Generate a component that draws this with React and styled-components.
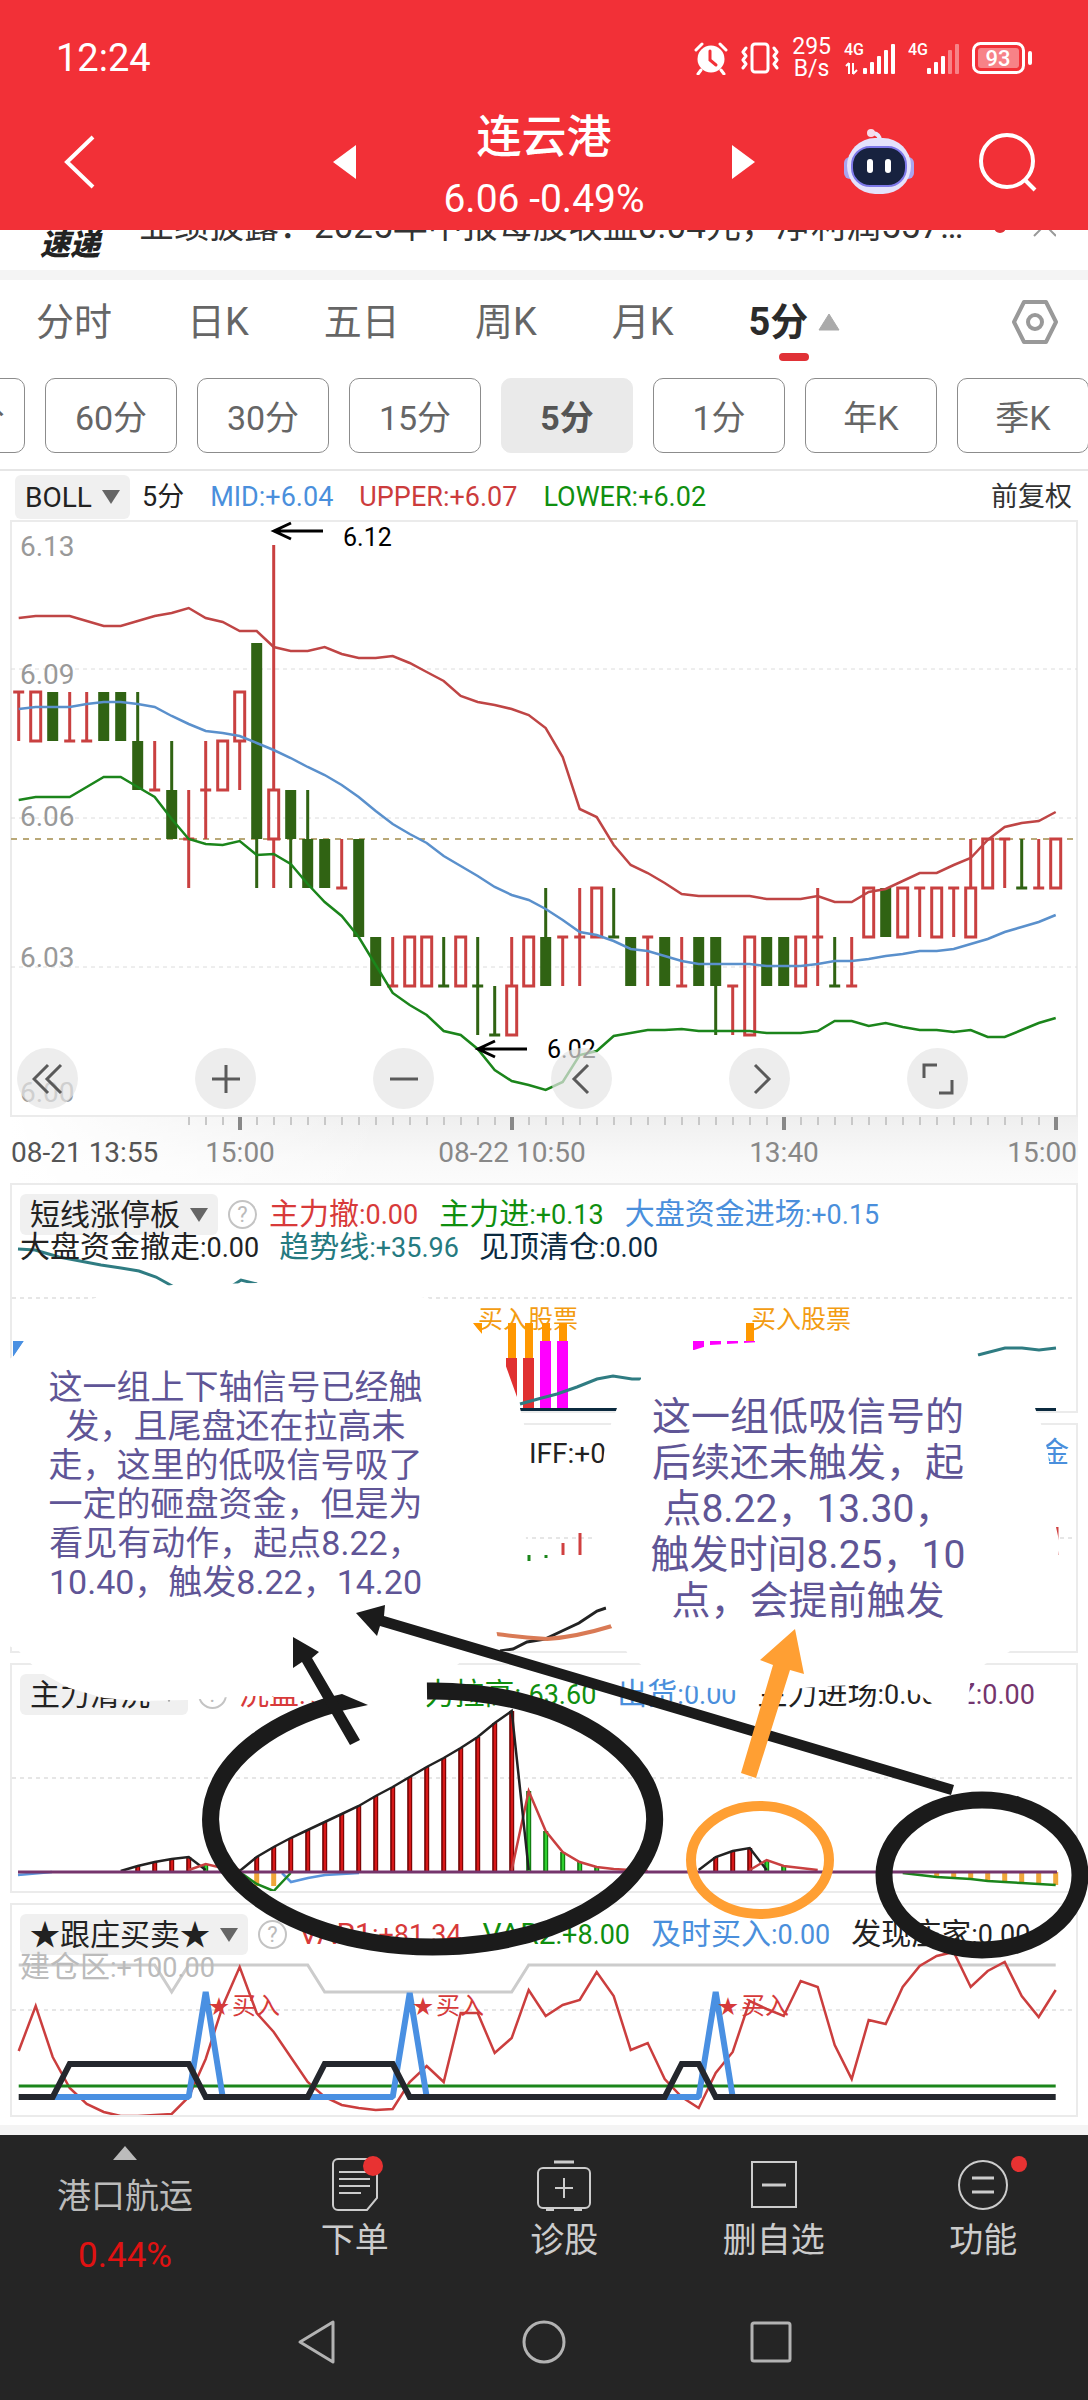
import React from 'react';
import styled, { createGlobalStyle } from 'styled-components';

const Global = createGlobalStyle`
  * { box-sizing: border-box; }
  body { margin: 0; background: #fff; color: #222; font-family: Roboto, "Noto Sans CJK SC", sans-serif; }
  button, select { font: inherit; color: inherit; border: 0; background: none; padding: 0; margin: 0; cursor: pointer; }
  svg { display: block; }
  svg text { font-family: Roboto, "Noto Sans CJK SC", sans-serif; }
  p { margin: 0; }
`;

const RED = '#c94040';
const GREEN = '#306313';
const BLUE = '#4a8fdc';

/* ---------- header ---------- */

const Header = styled.header`
  background: #f23037;
  color: #fff;
`;
const StatusBar = styled.div`
  display: flex;
  align-items: center;
  justify-content: space-between;
  height: 94px;
  padding: 22px 55px 0 56px;
`;
const Clock = styled.span`
  font-size: 38px;
  font-weight: 400;
  line-height: 40px;
`;
const StatusIcons = styled.div`
  display: flex;
  align-items: center;
  gap: 13px;
`;
const NetSpeed = styled.span`
  font-size: 23px;
  line-height: 22px;
  text-align: center;
`;
const TitleBar = styled.div`
  display: grid;
  grid-template-columns: 1fr auto 1fr;
  align-items: center;
  height: 136px;
`;
const BackButton = styled.button`
  justify-self: start;
  padding-left: 64px;
`;
const TitleGroup = styled.div`
  display: flex;
  align-items: center;
  justify-content: space-between;
  width: 422px;
`;
const TitleText = styled.div`
  padding-top: 8px;
  text-align: center;
`;
const StockName = styled.h1`
  margin: 0;
  font-size: 45px;
  font-weight: 500;
  line-height: 66px;
`;
const StockPrice = styled.p`
  font-size: 39px;
  line-height: 56px;
`;
const TitleActions = styled.div`
  display: flex;
  align-items: center;
  justify-content: flex-end;
  gap: 64px;
  padding-right: 50px;
`;

/* ---------- news strip ---------- */

const Ticker = styled.section`
  display: flex;
  align-items: flex-start;
  height: 40px;
  padding: 0 32px 0 40px;
  overflow: hidden;
`;
const TickerLogo = styled.span`
  flex: 0 0 99px;
  font-size: 30px;
  font-weight: 900;
  font-style: italic;
  line-height: 30px;
  white-space: nowrap;
`;
const Headline = styled.a`
  flex: 1;
  margin-top: -28px;
  font-size: 35px;
  line-height: 50px;
  color: #333;
  text-decoration: none;
  white-space: nowrap;
`;
const Band = styled.div`
  height: 10px;
  background: #f4f4f4;
`;

/* ---------- period tabs ---------- */

const Tabs = styled.nav`
  display: flex;
  align-items: center;
  gap: 75px;
  height: 86px;
  padding: 0 30px 2px 36px;
`;
const Tab = styled.button`
  display: flex;
  flex-direction: column;
  align-items: center;
  font-size: 38px;
  line-height: 78px;
  font-weight: ${(p) => (p.$active ? 700 : 400)};
  color: ${(p) => (p.$active ? '#2b2b2b' : '#666')};
`;
const TabLabel = styled.span`
  display: flex;
  align-items: center;
  gap: 10px;
`;
const Underline = styled.span`
  width: 30px;
  height: 8px;
  margin-top: -8px;
  border-radius: 4px;
  background: #e03136;
`;
const SettingsButton = styled.button`
  margin-left: auto;
`;
const ChipRow = styled.div`
  overflow: hidden;
  height: 105px;
  padding-top: 12px;
  border-bottom: 2px solid #e6e6e6;
`;
const ChipTrack = styled.div`
  display: flex;
  gap: 20px;
  margin-left: -107px;
`;
const Chip = styled.button`
  flex: 0 0 132px;
  height: 75px;
  border: 1px solid ${(p) => (p.$active ? '#eaeaea' : '#8c8c8c')};
  border-radius: 10px;
  background: ${(p) => (p.$active ? '#eaeaea' : '#fff')};
  color: ${(p) => (p.$active ? '#555' : '#666')};
  font-size: 34px;
  font-weight: ${(p) => (p.$active ? 700 : 400)};
`;

/* ---------- legends ---------- */

const Picker = styled.label`
  display: flex;
  align-items: center;
  height: ${(p) => (p.$tall ? 44 : 41)}px;
  border-radius: 6px;
  background: #f0f0f0;
  select {
    appearance: none;
    height: 100%;
    padding: 0 38px 0 10px;
    font-size: ${(p) => (p.$tall ? 28 : 30)}px;
    color: #222;
    outline: none;
  }
  svg {
    margin-left: -28px;
    margin-right: 10px;
    pointer-events: none;
  }
`;
const MainLegend = styled.div`
  display: flex;
  align-items: center;
  gap: 26px;
  height: 49px;
  padding: 2px 16px 0 15px;
  font-size: 27px;
  line-height: 46px;
  white-space: nowrap;
`;
const PeriodGroup = styled.span`
  display: flex;
  align-items: center;
  gap: 12px;
`;
const Adjust = styled.button`
  margin-left: auto;
  color: #333;
`;
const Legend = styled.div`
  grid-area: 1 / 1;
  position: relative;
  padding: 8px 8px 0;
`;
const LegendRow = styled.div`
  display: flex;
  align-items: center;
  gap: ${(p) => (p.$second ? 20 : 21)}px;
  margin-top: ${(p) => (p.$second ? -4 : 0)}px;
  line-height: ${(p) => (p.$second ? 30 : 41)}px;
  font-size: 30px;
  white-space: nowrap;
`;
const PickerGroup = styled.span`
  display: flex;
  align-items: center;
  gap: 10px;
  margin-right: -9px;
`;
const HelpButton = styled.button`
  width: 29px;
  height: 29px;
  border: 2px solid #c4c4c4;
  border-radius: 50%;
  color: #bbb;
  font-size: 22px;
  line-height: 25px;
`;
const Item = styled.span`
  color: ${(p) => p.$color};
`;
const Num = styled.span`
  font-size: 27px;
`;

/* ---------- charts ---------- */

const ChartArea = styled.section`
  position: relative;
`;
const Drawing = styled.svg`
  width: 100%;
  height: auto;
`;
const Tools = styled.div`
  position: absolute;
  left: 17px;
  top: 528px;
  display: flex;
  gap: 117px;
`;
const ToolButton = styled.button`
  display: grid;
  place-items: center;
  width: 61px;
  height: 61px;
  border-radius: 50%;
  background: rgba(229, 229, 229, 0.7);
`;
const Stage = styled.section`
  position: relative;
  display: flex;
  flex-direction: column;
  gap: 10px;
  padding: 0 10px 8px;
`;
const Panel = styled.article`
  display: grid;
  border: 2px solid #ebebeb;
`;
const PanelDrawing = styled(Drawing)`
  grid-area: 1 / 1;
`;
const Marks = styled(Drawing)`
  position: absolute;
  left: 0;
  top: 0;
  pointer-events: none;
`;
const Note = styled.p`
  position: absolute;
  left: ${(p) => p.$left}%;
  top: ${(p) => p.$top}px;
  width: ${(p) => p.$width}px;
  font-size: ${(p) => p.$size}px;
  line-height: ${(p) => p.$line}px;
  color: #5f5596;
  text-align: center;
  white-space: nowrap;
  span { display: block; }
`;

/* ---------- footer ---------- */

const Footer = styled.footer`
  background: #252525;
  color: #ccc;
`;
const ActionBar = styled.nav`
  display: flex;
  height: 158px;
`;
const Sector = styled.button`
  display: flex;
  flex-direction: column;
  align-items: center;
  width: 250px;
  padding-top: 11px;
  font-size: 34px;
  line-height: 60px;
  color: #bbb;
  white-space: nowrap;
`;
const SectorName = styled.span`
  margin-top: 6px;
`;
const Change = styled.span`
  font-size: 35px;
  color: #e01212;
`;
const Action = styled.button`
  flex: 1;
  display: flex;
  flex-direction: column;
  align-items: center;
  padding-top: 20px;
  font-size: 34px;
  line-height: 54px;
  color: #ccc;
`;
const SystemBar = styled.nav`
  display: flex;
  justify-content: center;
  align-items: center;
  gap: 183px;
  height: 107px;
  padding-bottom: 10px;
`;

/* ---------- data ---------- */

const px = (i) => 18.7 + 17 * i;
const level = (l) => 692 + 49 * l;
const line = (ys, from = 0) => ys.map((y, k) => `${px(from + k)},${y}`).join(' ');

// kind, high, body top, body bottom, low (in price steps of 0.01 below 6.09)
const candles = [
  'r 0 0 0 1', 'r 0 0 1 1', 'g 0 0 1 1', 'r 0 1 1 1', 'r 0 1 1 1', 'g 0 0 1 1', 'g 0 0 1 1', 'g 0 1 2 2',
  'r 1 2 2 2', 'g 1 2 3 3', 'r 2 3 3 4', 'r 1 2 2 3', 'r 1 1 2 2', 'r 0 0 1 2', 'g -1 -1 3 4', 'r -3 2 3 4',
  'g 2 2 3 4', 'g 2 3 4 4', 'g 3 3 4 4', 'r 3 4 4 4', 'g 3 3 5 5', 'g 5 5 6 6', 'r 5 6 6 6', 'r 5 5 6 6',
  'r 5 5 6 6', 'g 5 6 6 6', 'r 5 5 6 6', 'g 5 6 6 7', 'g 6 7 7 7', 'r 5 6 7 7', 'r 5 5 6 6', 'g 4 5 6 6',
  'r 5 5 5 6', 'r 4 5 5 6', 'r 4 4 5 5', 'g 4 5 5 5', 'g 5 5 6 6', 'r 5 5 5 6', 'g 5 5 6 6', 'r 5 6 6 6',
  'g 5 5 6 6', 'g 5 5 6 7', 'r 6 6 6 7', 'r 5 5 7 7', 'g 5 5 6 6', 'g 5 5 6 6', 'r 5 5 6 6', 'r 4 5 5 6',
  'g 5 6 6 6', 'r 5 6 6 6', 'r 4 4 5 5', 'g 4 4 5 5', 'r 4 4 5 5', 'r 4 4 4 5', 'r 4 4 5 5', 'r 4 4 4 5',
  'r 3 4 5 5', 'r 3 3 4 4', 'r 3 3 3 4', 'g 3 4 4 4', 'r 3 4 4 4', 'r 3 3 4 4',
].map((s) => s.split(' '));

const upper = [618, 616, 616, 616, 621, 626, 626, 621, 616, 613, 608, 618, 622, 631, 631, 647, 651, 651, 647, 654, 658, 658, 656, 663, 672, 681, 696, 702, 705, 709, 715, 728, 757, 809, 817, 845, 865, 873, 883, 894, 896, 896, 896, 896, 899, 899, 899, 896, 902, 902, 892, 889, 881, 873, 873, 865, 858, 840, 827, 823, 821, 812];
const mid = [709, 707, 707, 707, 704, 702, 702, 704, 707, 716, 724, 731, 733, 736, 743, 750, 758, 767, 775, 785, 797, 811, 824, 834, 843, 856, 866, 876, 887, 895, 900, 909, 920, 932, 935, 941, 949, 951, 956, 961, 964, 964, 964, 964, 966, 966, 966, 964, 961, 961, 959, 956, 954, 951, 951, 949, 944, 939, 932, 927, 922, 915];
const lower = [800, 797, 797, 797, 787, 777, 777, 787, 797, 819, 839, 844, 845, 841, 855, 854, 864, 884, 902, 916, 937, 965, 993, 1005, 1015, 1031, 1035, 1049, 1070, 1081, 1085, 1090, 1082, 1055, 1051, 1036, 1033, 1030, 1030, 1029, 1031, 1031, 1031, 1031, 1033, 1033, 1033, 1031, 1021, 1021, 1026, 1023, 1027, 1030, 1030, 1032, 1030, 1037, 1037, 1030, 1023, 1018];

const rise = [1871, 1857, 1847, 1838, 1830, 1822, 1814, 1806, 1796, 1787, 1777, 1767, 1758, 1748, 1737, 1723, 1711, 1870];
const fall = [1870, 1791, 1831, 1852, 1862, 1867, 1869, 1870, 1871];
const varLine = [2051, 2006, 2057, 2088, 2104, 2112, 2116, 2116, 2115, 2114, 2097, 2059, 2006, 1967, 2013, 2032, 2057, 2082, 2097, 2105, 2108, 2110, 2109, 2082, 2066, 2082, 2013, 2013, 2053, 2038, 1990, 2016, 2005, 2000, 1972, 1996, 2050, 2043, 2079, 2097, 2108, 2073, 2052, 2001, 2009, 2016, 1981, 1987, 2045, 2079, 2020, 2024, 1987, 1966, 1956, 1952, 1987, 1971, 1962, 1996, 2017, 1990];

function Candle({ i, c }) {
  const [kind, ...v] = c;
  const [h, t, b, l] = v.map((n) => level(Number(n)));
  const x = px(i);
  if (kind === 'g') {
    return (
      <g fill={GREEN}>
        <rect x={x - 1.5} y={h} width="3" height={l - h} />
        {b > t ? <rect x={x - 5.5} y={t} width="11" height={b - t} /> : <rect x={x - 5.5} y={t - 1.5} width="11" height="3" />}
      </g>
    );
  }
  return (
    <g fill={RED}>
      {t > h && <rect x={x - 1.5} y={h} width="3" height={t - h} />}
      {l > b && <rect x={x - 1.5} y={b} width="3" height={l - b} />}
      {b > t ? (
        <rect x={x - 5} y={t} width="10" height={b - t} fill="none" stroke={RED} strokeWidth="3" />
      ) : (
        <rect x={x - 5.5} y={t - 1.5} width="11" height="3" />
      )}
    </g>
  );
}

const Arrow = ({ x, y }) => (
  <path d={`M${x + 17} ${y - 8} L${x} ${y} L${x + 17} ${y + 8} M${x} ${y} H${x + 49}`} fill="none" stroke="#000" strokeWidth="3" />
);

function PriceChart() {
  const ticks = Array.from({ length: 52 }, (_, k) => k + 10);
  return (
    <Drawing viewBox="0 520 1088 663" role="img" aria-label="连云港 5分 K线">
      <defs>
        <linearGradient id="axisFade" x1="0" x2="1">
          <stop offset="0" stopColor="#fff" />
          <stop offset="0.35" stopColor="#fff" stopOpacity="0" />
        </linearGradient>
        <linearGradient id="axisShade" x1="0" x2="0" y1="0" y2="1">
          <stop offset="0" stopColor="#efefef" />
          <stop offset="0.7" stopColor="#f9f9f9" />
          <stop offset="1" stopColor="#fbfbfb" />
        </linearGradient>
      </defs>
      <rect x="10" y="1116" width="1068" height="67" fill="url(#axisShade)" />
      <rect x="10" y="1116" width="1068" height="67" fill="url(#axisFade)" />
      <rect x="11" y="521" width="1066" height="595" fill="#fff" stroke="#ebebeb" strokeWidth="2" />
      <path d="M11 669 H1077 M11 818 H1077 M11 967 H1077" stroke="#dcdcdc" strokeWidth="1" strokeDasharray="4 4" />
      <path d="M11 839 H1077" stroke="#b9a878" strokeWidth="2" strokeDasharray="6 6" />
      {candles.map((c, i) => <Candle key={i} i={i} c={c} />)}
      <g fill="none" strokeWidth="2.5">
        <polyline points={line(upper)} stroke="#bf4545" />
        <polyline points={line(mid)} stroke="#5a90cc" />
        <polyline points={line(lower)} stroke="#1b851b" />
      </g>
      <g fontSize="28" fill="#999">
        <text x="20" y="556">6.13</text>
        <text x="20" y="684">6.09</text>
        <text x="20" y="826">6.06</text>
        <text x="20" y="967">6.03</text>
        <text x="20" y="1102">6.00</text>
      </g>
      <Arrow x={274} y={531} />
      <Arrow x={478} y={1049} />
      <g fontSize="25" fill="#000">
        <text x="343" y="546">6.12</text>
        <text x="547" y="1058">6.02</text>
      </g>
      {ticks.map((i) => {
        const major = (i - 13) % 16 === 0;
        return <rect key={i} x={i * 17 + (major ? 17 : 18)} y="1117" width={major ? 4 : 2} height={major ? 13 : 8} fill={major ? '#888' : '#c8c8c8'} />;
      })}
      <g fontSize="28" fill="#888" textAnchor="middle">
        <text x="11" y="1162" textAnchor="start" fill="#555">08-21 13:55</text>
        <text x="240" y="1162">15:00</text>
        <text x="512" y="1162">08-22 10:50</text>
        <text x="784" y="1162">13:40</text>
        <text x="1077" y="1162" textAnchor="end">15:00</text>
      </g>
    </Drawing>
  );
}

const ToolIcon = ({ d }) => (
  <svg width="32" height="32" viewBox="0 0 32 32" fill="none" stroke="#5a5a5a" strokeWidth="3">
    <path d={d} />
  </svg>
);

const tools = [
  ['快退', 'M16 2 L2 16 L16 30 M29 2 L15 16 L29 30'],
  ['放大', 'M16 2 V30 M2 16 H30'],
  ['缩小', 'M2 16 H30'],
  ['左移', 'M22 2 L8 16 L22 30'],
  ['右移', 'M11 2 L25 16 L11 30'],
  ['全屏', 'M2 15 V2 H15 M30 17 V30 H17'],
];

const Caret = () => (
  <svg width="18" height="14" viewBox="0 0 18 14"><path d="M0 0 H18 L9 14 Z" fill="#666" /></svg>
);

const IndicatorPicker = ({ name, tall }) => (
  <Picker $tall={tall}>
    <select aria-label="指标" defaultValue={name}><option>{name}</option></select>
    <Caret />
  </Picker>
);

function IndicatorLegend({ name, items, more }) {
  const draw = ([label, num, color]) => (
    <Item key={label} $color={color}>{label}<Num>:{num}</Num></Item>
  );
  return (
    <Legend>
      <LegendRow>
        <PickerGroup>
          <IndicatorPicker name={name} />
          <HelpButton aria-label="指标说明">?</HelpButton>
        </PickerGroup>
        {items.map(draw)}
      </LegendRow>
      {more && <LegendRow $second>{more.map(draw)}</LegendRow>}
    </Legend>
  );
}

const grid = (y) => <path d={`M12 ${y} H1076`} stroke="#e6e6e6" strokeWidth="2" strokeDasharray="4 4" />;

const Bars = ({ from, tops, dark, light, base = 1871 }) =>
  tops.map((y, k) => (
    <g key={k}>
      <rect x={px(from + k) - 2.5} y={y} width="5" height={base - y} fill={dark} />
      <rect x={px(from + k) - 1} y={y} width="2.5" height={base - y} fill={light} />
    </g>
  ));

function FundsPanel() {
  return (
    <Panel>
      <PanelDrawing viewBox="12 1185 1064 226">
        {grid(1298)}
        <g fill="none" stroke="#2f7c82" strokeWidth="3">
          <path d="M18 1249 L35 1250 L59 1257 L101 1265 L121 1268 L139 1271 L156 1277 L174 1287 M232 1286 L241 1280 L257 1284" />
          <path d="M978 1355 L1005 1348 L1022 1348 L1039 1350 L1056 1348" />
        </g>
        <g fill="#f39c12" fontSize="25">
          <text x="478" y="1328">买入股票</text>
          <text x="751" y="1328">买入股票</text>
        </g>
        <path d="M13 1341 H24 L13 1357 Z" fill="#4a90e2" />
        <path d="M473 1323 h9 v12 Z M508 1323 h8 v36 h-8 Z M525 1323 h8 v36 h-8 Z M542 1323 h8 v20 h-8 Z M559 1323 h8 v20 h-8 Z M746 1323 h8 v18 h-8 Z" fill="#ff9800" />
        <path d="M506 1358 h11 v52 h-11 Z M523 1358 h11 v52 h-11 Z" fill="#e03131" />
        <path d="M540 1341 h11 v70 h-11 Z M557 1341 h11 v70 h-11 Z M693 1341 h11 v9 h-11 Z M710 1341 h11 v4 h-11 Z M727 1341 h11 v3 h-11 Z M744 1341 h11 v2 h-11 Z" fill="#f0f" />
        <path d="M520 1404 L538 1399 L557 1394 L577 1387 L597 1379 L613 1376 L632 1379 L641 1379" fill="none" stroke="#2f7c82" strokeWidth="3" />
        <path d="M520 1410 H1056" stroke="#0b2a3f" strokeWidth="4" />
      </PanelDrawing>
      <IndicatorLegend
        name="短线涨停板"
        items={[['主力撤', '0.00', '#d83a3a'], ['主力进', '+0.13', '#0f8f0f'], ['大盘资金进场', '+0.15', BLUE]]}
        more={[['大盘资金撤走', '0.00', '#222'], ['趋势线', '+35.96', '#257a80'], ['见顶清仓', '0.00', '#0b2a3f']]}
      />
    </Panel>
  );
}

function DiffPanel() {
  return (
    <Panel>
      <PanelDrawing viewBox="12 1425 1064 226">
        {grid(1538)}
        <text x="529" y="1463" fontSize="28" fill="#222">IFF:+0</text>
        <text x="1040" y="1463" fontSize="29" fill={BLUE}>金</text>
        <path d="M529 1555 v6 M546 1555 v3" stroke="#1b851b" strokeWidth="3" />
        <path d="M563 1543 v12 M580 1533 v22 M1057 1527 v28" stroke="#d04040" strokeWidth="3" />
        <path d="M500 1651 L513 1649 L527 1642 L545 1639 L562 1631 L579 1623 L597 1611 L606 1608" fill="none" stroke="#222" strokeWidth="3" />
        <path d="M496 1634 Q520 1637 547 1639 Q576 1637 612 1626" fill="none" stroke="#d97a55" strokeWidth="4" />
      </PanelDrawing>
    </Panel>
  );
}

function WashPanel() {
  return (
    <Panel>
      <PanelDrawing viewBox="12 1665 1064 226">
        {grid(1778)}
        <Bars from={7} tops={[1866, 1862, 1859, 1857]} dark="#6b0000" light="#d81818" />
        <Bars from={14} tops={rise.slice(1, 17)} dark="#6b0000" light="#d81818" />
        <Bars from={41} tops={[1857, 1851, 1848]} dark="#6b0000" light="#d81818" />
        <Bars from={11} tops={[1865]} dark="#0a6b0a" light="#2fd02f" />
        <Bars from={30} tops={fall.slice(1, 6)} dark="#0a6b0a" light="#2fd02f" />
        <Bars from={44} tops={[1860, 1866]} dark="#0a6b0a" light="#2fd02f" />
        <Bars from={14} tops={[1873, 1873]} dark="#efa63a" light="#efa63a" base={1886} />
        {[54, 55, 56, 57, 58, 59, 60, 61].map((i) => (
          <rect key={i} x={px(i) - 2.5} y="1872" width="5" height={5 + (i - 53)} fill="#efa63a" />
        ))}
        <path d="M18 1875 L52 1872 M282 1873 L291 1882 L308 1878 L325 1875 L359 1873" fill="none" stroke="#5a95dd" strokeWidth="2.5" />
        <g fill="none" strokeWidth="2.5">
          <polyline points={line([1871, 1866, 1862, 1859, 1857, 1870], 6)} stroke="#222" />
          <polyline points={line([1870, 1864, 1868, 1870], 10)} stroke={RED} />
          <polyline points={line(fall, 29)} stroke={RED} />
          <polyline points={line(rise, 13)} stroke="#222" />
          <polyline points={line([1870, 1857, 1851, 1848, 1870], 40)} stroke="#222" />
          <polyline points={line([1870, 1860, 1866, 1868, 1870], 43)} stroke={RED} />
          <polyline points={line([1872, 1884, 1891, 1873], 13)} stroke="#1b851b" />
          <polyline points={line([1873, 1875, 1877, 1878, 1879, 1881, 1882, 1883, 1884, 1885], 52)} stroke="#1b851b" />
        </g>
        <path d="M18 1872 H1057" stroke="#75356d" strokeWidth="3" />
      </PanelDrawing>
      <IndicatorLegend
        name="主力清洗"
        items={[['洗盘', '+0.00', '#d83a3a'], ['主力拉高', '-63.60', '#0f8f0f'], ['出货', '0.00', BLUE], ['主力进场', '0.00', '#222'], ['Z', '0.00', '#75356d']]}
      />
    </Panel>
  );
}

function DealerPanel() {
  return (
    <Panel>
      <PanelDrawing viewBox="12 1905 1064 210">
        {grid(2010)}
        <path d={`M18.7 1965 H${px(8)} L${px(9)} 1992 L${px(10)} 1965 H${px(17)} L${px(18)} 1992 H${px(29)} L${px(30)} 1965 H${px(61)}`} fill="none" stroke="#ccc" strokeWidth="3" />
        <polyline points={line(varLine)} fill="none" stroke="#cb3e3e" strokeWidth="2.5" />
        <path d={`M18.7 2086 H${px(61)}`} stroke="#1b851b" strokeWidth="3" />
        <g fill="none" stroke="#4a90e2" strokeWidth="6" strokeLinejoin="bevel">
          <path d={`M${px(2)} 2097 H${px(10)} L${px(11)} 1992 L${px(12)} 2097`} />
          <path d={`M${px(17)} 2097 H${px(22)} L${px(23)} 1993 L${px(24)} 2097`} />
          <path d={`M${px(38)} 2097 H${px(40)} L${px(41)} 1992 L${px(42)} 2097`} />
        </g>
        <path
          d={`M18.7 2097 H${px(2)} L${px(3)} 2064 H${px(10)} L${px(11)} 2097 H${px(17)} L${px(18)} 2064 H${px(22)} L${px(23)} 2097 H${px(38)} L${px(39)} 2064 H${px(40)} L${px(41)} 2097 H${px(61)}`}
          fill="none" stroke="#24272d" strokeWidth="6"
        />
        {[209, 413, 718].map((x) => (
          <text key={x} x={x} y="2014" fontSize="24" fill="#d63a3a"><tspan fontSize="20">★</tspan><tspan dx="3">买入</tspan></text>
        ))}
      </PanelDrawing>
      <IndicatorLegend
        name="★跟庄买卖★"
        items={[['VAR1', '+81.34', '#d83a3a'], ['VAR2', '+8.00', '#0f8f0f'], ['及时买入', '0.00', BLUE], ['发现庄家', '0.00', '#222']]}
        more={[['建仓区', '+100.00', '#bbb']]}
      />
    </Panel>
  );
}

function Annotations() {
  return (
    <>
      <Marks viewBox="0 1183 1088 942" aria-hidden="true">
        <g fill="#fff">
          <path d="M0 1365 L14 1356 L24 1341 L50 1320 L87 1300 L120 1292 L172 1285 L257 1283 L340 1285 L428 1298 L473 1324 L483 1335 L503 1358 L517 1397 L521 1412 L524 1424 L528 1453 L520 1500 L526 1538 L520 1600 L496 1630 L500 1648 L470 1654 L457 1665 L428 1684 L426 1712 L340 1710 L298 1696 L243 1696 L187 1700 L139 1701 L104 1698 L69 1688 L42 1673 L29 1662 L18 1650 L0 1642 Z" />
          <path d="M694 1350 L710 1345 L760 1342 L900 1335 L978 1356 L1035 1408 L1041 1424 L1048 1453 L1056 1527 L1060 1545 L1050 1600 L1009 1652 L985 1664 L970 1684 L968 1712 L936 1706 L915 1692 L890 1684 L830 1686 L779 1690 L743 1691 L690 1686 L650 1672 L628 1654 L611 1626 L604 1600 L594 1538 L604 1453 L611 1424 L617 1408 L641 1379 Z" />
        </g>
        <g fill="#1b1b1b">
          <path d="M427 1691 A222 128 0 1 1 335 1704" fill="none" stroke="#1b1b1b" strokeWidth="17" />
          <path d="M325 1698 L342 1694 L368 1705 L332 1713 Z" />
          <path d="M293 1637 L319 1652 L312 1658 L360 1740 L350 1745 L302 1662 L293 1668 Z" />
          <path d="M356 1613 L385 1605 L384 1616 L954 1785 L951 1795 L380 1626 L377 1636 Z" />
          <ellipse cx="982" cy="1875" rx="98" ry="75" fill="none" stroke="#1b1b1b" strokeWidth="17" />
        </g>
        <path d="M795 1629 L804 1674 L790 1670 L756 1778 L741 1773 L773 1665 L760 1660 Z" fill="#ff9f33" />
        <ellipse cx="760" cy="1860" rx="69" ry="54" fill="none" stroke="#ff9f33" strokeWidth="10" />
      </Marks>
      <Note $left={4} $top={185} $width={384} $size={34} $line={39}>
        <span>这一组上下轴信号已经触</span>
        <span>发，且尾盘还在拉高未</span>
        <span>走，这里的低吸信号吸了</span>
        <span>一定的砸盘资金，但是为</span>
        <span>看见有动作，起点8.22，</span>
        <span>10.40，触发8.22，14.20</span>
      </Note>
      <Note $left={59} $top={211} $width={332} $size={39} $line={46}>
        <span>这一组低吸信号的</span>
        <span>后续还未触发，起</span>
        <span>点8.22，13.30，</span>
        <span>触发时间8.25，10</span>
        <span>点，会提前触发</span>
      </Note>
    </>
  );
}

/* ---------- icons ---------- */

const AlarmIcon = () => (
  <svg width="34" height="34" viewBox="0 0 34 34">
    <circle cx="17" cy="18" r="13.5" fill="#fff" />
    <path d="M2 9 L8 3 M32 9 L26 3 M7 29 L4 33 M27 29 L30 33" stroke="#fff" strokeWidth="3" strokeLinecap="round" />
    <path d="M16 10 V19 L22 24" stroke="#f23037" strokeWidth="3" fill="none" strokeLinecap="round" />
  </svg>
);
const VibrateIcon = () => (
  <svg width="38" height="32" viewBox="0 0 38 32" fill="none" stroke="#fff" strokeWidth="3" strokeLinecap="round" strokeLinejoin="round">
    <rect x="11" y="2" width="16" height="28" rx="3" />
    <path d="M5 6 L2 10 L5 14 L2 18 L5 22 L2 26 M33 6 L36 10 L33 14 L36 18 L33 22 L36 26" />
  </svg>
);
const SignalIcon = ({ weak }) => (
  <svg width="51" height="34" viewBox="0 0 51 34" fill="#fff">
    <text x="0" y="14" fontSize="16" fontWeight="500">4G</text>
    {!weak && <path d="M5 22 V33 M2 25 L5 22 M9 22 V33 M9 33 L13 29" stroke="#fff" strokeWidth="2" fill="none" />}
    {[0, 1, 2, 3, 4].map((k) => (
      <rect key={k} x={19 + k * 7} y={27 - k * 6} width="4" height={6 + k * 6} rx="1" opacity={weak && k > 2 ? 0.4 : 1} />
    ))}
  </svg>
);
const BatteryIcon = () => (
  <svg width="61" height="32" viewBox="0 0 61 32">
    <rect x="1.5" y="1.5" width="50" height="29" rx="7" fill="none" stroke="#fff" strokeWidth="3" />
    <rect x="6" y="6" width="41" height="20" rx="3" fill="#fff" opacity="0.4" />
    <rect x="56" y="9" width="4" height="14" rx="2" fill="#fff" />
    <text x="26" y="24" fontSize="22" fontWeight="500" fill="#fff" textAnchor="middle">93</text>
  </svg>
);
const RobotIcon = () => (
  <svg width="70" height="66" viewBox="0 0 70 66">
    <path d="M36 12 Q36 5 29 4" stroke="#e8e8fb" strokeWidth="4" fill="none" />
    <circle cx="27" cy="4" r="4" fill="#f6dcea" />
    <rect x="0" y="28" width="12" height="22" rx="6" fill="#a9a5ee" />
    <rect x="58" y="28" width="12" height="22" rx="6" fill="#a9a5ee" />
    <rect x="3" y="9" width="64" height="56" rx="28" fill="#e4e2fb" />
    <rect x="8" y="18" width="54" height="39" rx="18" fill="#17223f" stroke="#7d78e8" strokeWidth="2" />
    <rect x="23" y="30" width="6" height="14" rx="3" fill="#fff" />
    <rect x="41" y="30" width="6" height="14" rx="3" fill="#fff" />
  </svg>
);

const actions = [
  ['下单', (
    <>
      <path d="M10 4 H44 A5 5 0 0 1 49 9 V43 L39 55 H10 A5 5 0 0 1 5 50 V9 A5 5 0 0 1 10 4 Z" />
      <path d="M11 17 H42 M11 24 H42 M11 31 H42 M11 38 H33" />
      <circle cx="45" cy="11" r="10" fill="#e83232" stroke="none" />
    </>
  )],
  ['诊股', (
    <>
      <path d="M17 7 H37" strokeWidth="3" />
      <rect x="1" y="13" width="52" height="40" rx="5" />
      <path d="M27 23 V43 M18 33 H36 M9 55 H17 M37 55 H45" />
    </>
  )],
  ['删自选', (
    <>
      <rect x="5" y="7" width="44" height="45" />
      <path d="M15 30 H39" strokeWidth="3" />
    </>
  )],
  ['功能', (
    <>
      <circle cx="27" cy="30" r="24" />
      <path d="M16 23 H38 M16 37 H38" strokeWidth="3" />
      <circle cx="63" cy="9" r="8" fill="#e83232" stroke="none" />
    </>
  )],
];

const tabs = ['分时', '日K', '五日', '周K', '月K'];
const chips = ['120分', '60分', '30分', '15分', '5分', '1分', '年K', '季K'];

export default function App() {
  return (
    <>
      <Global />
      <Header>
        <StatusBar>
          <Clock>12:24</Clock>
          <StatusIcons>
            <AlarmIcon />
            <VibrateIcon />
            <NetSpeed>295<br />B/s</NetSpeed>
            <SignalIcon />
            <SignalIcon weak />
            <BatteryIcon />
          </StatusIcons>
        </StatusBar>
        <TitleBar>
          <BackButton aria-label="返回">
            <svg width="32" height="54" viewBox="0 0 32 54"><path d="M29 2 L3 27 L29 52" fill="none" stroke="#fff" strokeWidth="4" /></svg>
          </BackButton>
          <TitleGroup>
            <button aria-label="上一只"><svg width="23" height="34" viewBox="0 0 23 34"><path d="M23 0 V34 L0 17 Z" fill="#fff" /></svg></button>
            <TitleText>
              <StockName>连云港</StockName>
              <StockPrice>6.06 -0.49%</StockPrice>
            </TitleText>
            <button aria-label="下一只"><svg width="23" height="34" viewBox="0 0 23 34"><path d="M0 0 V34 L23 17 Z" fill="#fff" /></svg></button>
          </TitleGroup>
          <TitleActions>
            <button aria-label="智能助手"><RobotIcon /></button>
            <button aria-label="搜索">
              <svg width="60" height="60" viewBox="0 0 60 60" fill="none" stroke="#fff" strokeWidth="4"><circle cx="29" cy="29" r="26" /><path d="M47 48 L57 58" /></svg>
            </button>
          </TitleActions>
        </TitleBar>
      </Header>

      <Ticker>
        <TickerLogo>速递</TickerLogo>
        <Headline href="#news">业绩披露：2025年中报每股收益0.04元，净利润557…</Headline>
        <svg width="64" height="14" viewBox="0 0 64 14">
          <circle cx="8" cy="-3" r="6" fill="#e03136" />
          <path d="M42 6 L53 -5 L64 6" fill="none" stroke="#999" strokeWidth="2" />
        </svg>
      </Ticker>
      <Band />

      <Tabs>
        {tabs.map((t) => <Tab key={t}>{t}</Tab>)}
        <Tab $active>
          <TabLabel>
            5分
            <svg width="22" height="18" viewBox="0 0 22 18"><path d="M11 1 L21 17 H1 Z" fill="#aaa" stroke="#aaa" strokeLinejoin="round" /></svg>
          </TabLabel>
          <Underline />
        </Tab>
        <SettingsButton aria-label="设置">
          <svg width="46" height="44" viewBox="0 0 46 44" fill="none" stroke="#999" strokeWidth="4" strokeLinejoin="round">
            <path d="M12 2 H34 L44 22 L34 42 H12 L2 22 Z" /><circle cx="23" cy="22" r="7" />
          </svg>
        </SettingsButton>
      </Tabs>
      <ChipRow>
        <ChipTrack>
          {chips.map((c) => <Chip key={c} $active={c === '5分'}>{c}</Chip>)}
        </ChipTrack>
      </ChipRow>

      <MainLegend>
        <PeriodGroup><IndicatorPicker name="BOLL" tall />5分</PeriodGroup>
        <Item $color={BLUE}>MID:+6.04</Item>
        <Item $color="#cc3c3c">UPPER:+6.07</Item>
        <Item $color="#0f8f0f">LOWER:+6.02</Item>
        <Adjust>前复权</Adjust>
      </MainLegend>

      <ChartArea>
        <PriceChart />
        <Tools>
          {tools.map(([name, d]) => <ToolButton key={name} aria-label={name}><ToolIcon d={d} /></ToolButton>)}
        </Tools>
      </ChartArea>

      <Stage>
        <FundsPanel />
        <DiffPanel />
        <WashPanel />
        <DealerPanel />
        <Annotations />
      </Stage>
      <Band />

      <Footer>
        <ActionBar>
          <Sector>
            <svg width="24" height="14" viewBox="0 0 24 14"><path d="M12 0 L24 14 H0 Z" fill="#bbb" /></svg>
            <SectorName>港口航运</SectorName>
            <Change>0.44%</Change>
          </Sector>
          {actions.map(([name, art]) => (
            <Action key={name}>
              <svg width="54" height="58" viewBox="0 0 54 58" overflow="visible" fill="none" stroke="#ccc" strokeWidth="2">{art}</svg>
              {name}
            </Action>
          ))}
        </ActionBar>
        <SystemBar>
          <button aria-label="后退"><svg width="44" height="46" viewBox="0 0 44 46"><path d="M38 3 V43 L5 23 Z" fill="none" stroke="#b3b3b3" strokeWidth="3" strokeLinejoin="round" /></svg></button>
          <button aria-label="主页"><svg width="44" height="46" viewBox="0 0 44 46"><circle cx="22" cy="23" r="20" fill="none" stroke="#b3b3b3" strokeWidth="3" /></svg></button>
          <button aria-label="多任务"><svg width="44" height="46" viewBox="0 0 44 46"><rect x="3" y="4" width="38" height="38" rx="2" fill="none" stroke="#b3b3b3" strokeWidth="3" /></svg></button>
        </SystemBar>
      </Footer>
    </>
  );
}
